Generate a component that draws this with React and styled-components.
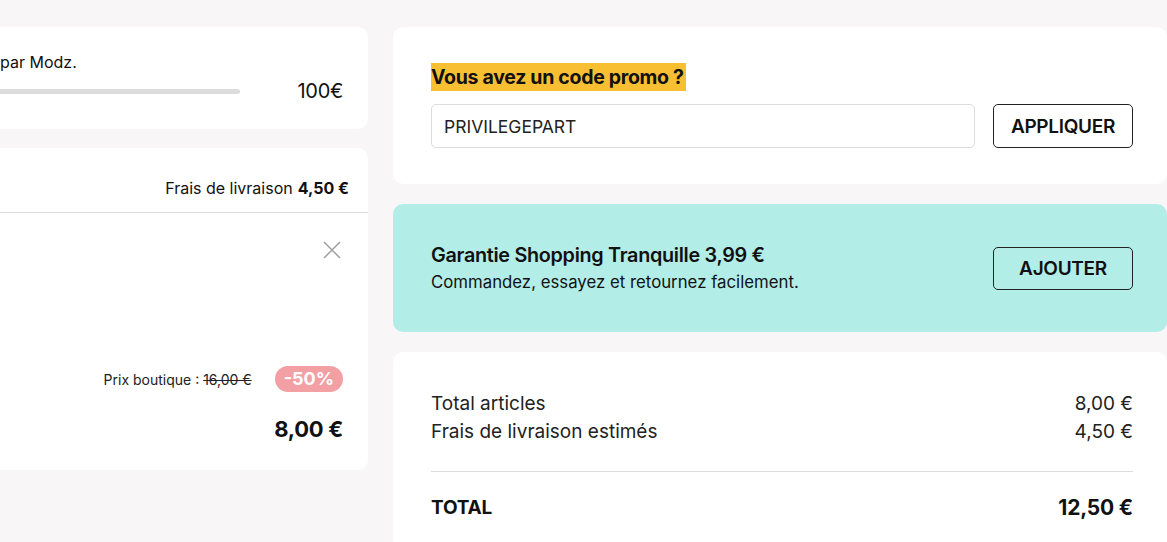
import React from 'react'
import styled, { createGlobalStyle } from 'styled-components'

const GlobalStyle = createGlobalStyle`
  body {
    margin: 0;
    background: #f8f6f6;
    font-family: Inter, "Liberation Sans", sans-serif;
    color: #111;
  }
`

const App = () => {
  return (
    <>
      <GlobalStyle />
      <Page>
        <LeftColumn>
          <ShippingCard>
            <FreeText>par Modz.</FreeText>
            <ProgressRow>
              <ProgressTrack />
              <Threshold>100€</Threshold>
            </ProgressRow>
          </ShippingCard>

          <ItemCard>
            <ItemHeader>
              Frais de livraison <b>4,50 €</b>
            </ItemHeader>
            <ItemBody>
              <CloseButton aria-label="Supprimer">
                <svg width="18" height="18" viewBox="0 0 18 18" fill="none" stroke="#a0a0a0" strokeWidth="1.5">
                  <path d="M1 1 L17 17 M17 1 L1 17" />
                </svg>
              </CloseButton>
              <PriceRow>
                <ShopPrice>
                  Prix boutique : <s>16,00 €</s>
                </ShopPrice>
                <Discount>-50%</Discount>
              </PriceRow>
              <FinalPrice>8,00 €</FinalPrice>
            </ItemBody>
          </ItemCard>
        </LeftColumn>

        <RightColumn>
          <PromoCard>
            <PromoTitle>Vous avez un code promo ?</PromoTitle>
            <PromoForm>
              <PromoInput defaultValue="PRIVILEGEPART" />
              <OutlineButton>APPLIQUER</OutlineButton>
            </PromoForm>
          </PromoCard>

          <GuaranteeCard>
            <div>
              <GuaranteeTitle>Garantie Shopping Tranquille 3,99 €</GuaranteeTitle>
              <GuaranteeText>Commandez, essayez et retournez facilement.</GuaranteeText>
            </div>
            <OutlineButton $small>AJOUTER</OutlineButton>
          </GuaranteeCard>

          <SummaryCard>
            <SummaryLine>
              <span>Total articles</span>
              <span>8,00 €</span>
            </SummaryLine>
            <SummaryLine>
              <span>Frais de livraison estimés</span>
              <span>4,50 €</span>
            </SummaryLine>
            <Divider />
            <TotalLine>
              <span>TOTAL</span>
              <TotalAmount>12,50 €</TotalAmount>
            </TotalLine>
          </SummaryCard>
        </RightColumn>
      </Page>
    </>
  )
}

export default App

const Page = styled.div`
  display: grid;
  grid-template-columns: 368px 774px;
  column-gap: 25px;
  padding-top: 27px;
  height: 542px;
  overflow: hidden;
  box-sizing: border-box;
`

const LeftColumn = styled.div`
  display: flex;
  flex-direction: column;
  gap: 19px;
`

const RightColumn = styled.div`
  display: flex;
  flex-direction: column;
  gap: 20px;
`

const LeftCard = styled.div`
  background: #fff;
  border-radius: 0 10px 10px 0;
  box-sizing: border-box;
`

const ShippingCard = styled(LeftCard)`
  height: 102px;
  padding: 25px 25px 0 0;
`

const FreeText = styled.div`
  font-size: 16px;
  line-height: 20px;
`

const ProgressRow = styled.div`
  display: flex;
  align-items: center;
  justify-content: space-between;
  margin-top: 5px;
`

const ProgressTrack = styled.div`
  width: 240px;
  height: 5px;
  background: #dcdcdc;
  border-radius: 0 3px 3px 0;
`

const Threshold = styled.div`
  font-size: 20px;
  line-height: 28px;
  letter-spacing: -0.3px;
`

const ItemCard = styled(LeftCard)`
  height: 322px;
`

const ItemHeader = styled.div`
  height: 65px;
  box-sizing: border-box;
  border-bottom: 1px solid #dcdcdc;
  display: flex;
  align-items: center;
  justify-content: flex-end;
  gap: 5px;
  padding: 15px 19px 0 0;
  font-size: 16px;

  b {
    font-weight: 700;
  }
`

const ItemBody = styled.div`
  display: flex;
  flex-direction: column;
  align-items: flex-end;
  padding: 28px 25px 0 0;
`

const CloseButton = styled.button`
  border: 0;
  background: none;
  padding: 0;
  margin-right: 2px;
  display: flex;
  cursor: pointer;
`

const PriceRow = styled.div`
  display: flex;
  align-items: center;
  gap: 23px;
  margin-top: 107px;
`

const ShopPrice = styled.div`
  font-size: 14px;
  color: #222;

  s {
    text-decoration-thickness: 1px;
  }
`

const Discount = styled.div`
  background: #f2a0a4;
  color: #fff;
  font-weight: 700;
  font-size: 18px;
  line-height: 26px;
  padding: 0 9px;
  border-radius: 13px;
`

const FinalPrice = styled.div`
  font-size: 22px;
  font-weight: 700;
  margin-top: 24px;
  letter-spacing: -0.3px;
`

const RightCard = styled.div`
  background: #fff;
  border-radius: 10px;
  box-sizing: border-box;
  padding: 0 34px 0 38px;
`

const PromoCard = styled(RightCard)`
  height: 157px;
  padding-top: 36px;
`

const PromoTitle = styled.div`
  display: inline-block;
  background: #f9bf33;
  font-size: 19.5px;
  font-weight: 700;
  line-height: 28px;
  letter-spacing: -0.3px;
  padding-right: 2px;
`

const PromoForm = styled.div`
  display: flex;
  gap: 18px;
  margin-top: 13px;
`

const PromoInput = styled.input`
  flex: 1;
  height: 44px;
  box-sizing: border-box;
  border: 1px solid #dcdcdc;
  border-radius: 5px;
  padding: 0 12px;
  font-family: inherit;
  font-size: 17.5px;
  color: #222;
  outline: none;
`

const OutlineButton = styled.button`
  width: 140px;
  height: ${p => (p.$small ? '43px' : '44px')};
  border: 1px solid #222;
  border-radius: 5px;
  background: transparent;
  font-family: inherit;
  font-size: 19px;
  font-weight: 600;
  color: #111;
  letter-spacing: -0.3px;
  cursor: pointer;
`

const GuaranteeCard = styled(RightCard)`
  height: 128px;
  background: #b3ede7;
  display: flex;
  align-items: center;
  justify-content: space-between;
`

const GuaranteeTitle = styled.div`
  font-size: 19.8px;
  font-weight: 600;
  line-height: 26px;
  letter-spacing: -0.3px;
`

const GuaranteeText = styled.div`
  font-size: 16.8px;
  line-height: 26px;
  margin-top: 1px;
`

const SummaryCard = styled(RightCard)`
  height: 220px;
  padding-top: 38px;
`

const SummaryLine = styled.div`
  display: flex;
  justify-content: space-between;
  font-size: 19px;
  line-height: 28px;
  color: #222;
`

const Divider = styled.div`
  height: 1px;
  background: #dcdcdc;
  margin: 25px 0 22px;
`

const TotalLine = styled.div`
  display: flex;
  justify-content: space-between;
  align-items: center;
  font-size: 19px;
  font-weight: 700;
  line-height: 28px;
  letter-spacing: -0.2px;
`

const TotalAmount = styled.span`
  font-size: 21px;
`
